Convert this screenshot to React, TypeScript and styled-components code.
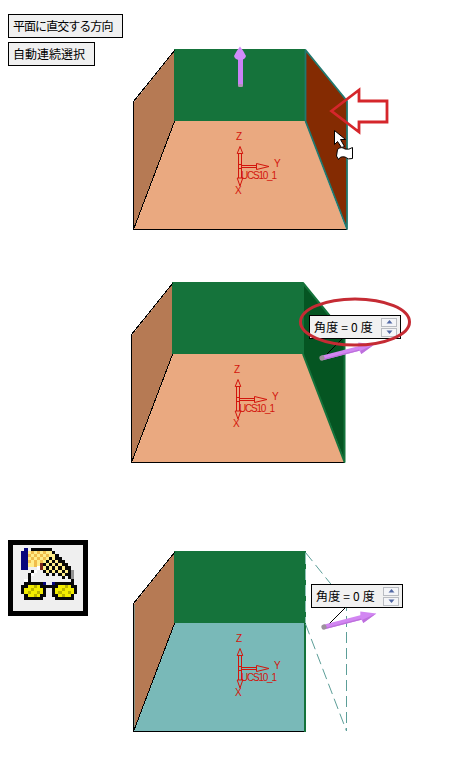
import React from "react";
import styled, { createGlobalStyle } from "styled-components";

const GlobalStyle = createGlobalStyle`
  body { margin: 0; background: #fff; overflow: hidden; }
  * { box-sizing: border-box; }
`;

const Page = styled.main`
  width: 453px;
  height: 769px;
  display: flex;
  flex-direction: column;
  background: #fff;
  color: #000;
  font-family: "Noto Sans CJK JP", sans-serif;
`;

const Step = styled.section<{ $height: number }>`
  display: flex;
  height: ${(p) => p.$height}px;
`;

const Side = styled.div<{ $top: number }>`
  width: 124px;
  flex: none;
  display: flex;
  flex-direction: column;
  align-items: flex-start;
  gap: 4px;
  padding: ${(p) => p.$top}px 0 0 8px;
`;

const OptionButton = styled.button<{ $width: number; $spacing?: number }>`
  width: ${(p) => p.$width}px;
  height: 24px;
  padding: 0 0 1px 4px;
  border: 1px solid #000;
  border-radius: 0;
  background: #f0f0f0;
  color: #000;
  font: 12px/20px "Noto Sans CJK JP", sans-serif;
  letter-spacing: ${(p) => p.$spacing ?? 0}px;
  text-align: left;
  white-space: nowrap;
`;

const ToolButton = styled.button`
  width: 80px;
  height: 76px;
  padding: 0;
  border: 5px solid #000;
  border-radius: 0;
  background: #efefef;
  display: flex;
`;

const Figure = styled.div`
  position: relative;
  flex: 1;
  min-width: 0;
`;

const Drawing = styled.svg`
  display: block;
`;

const Overlay = styled.svg`
  position: absolute;
  left: 0;
  top: 0;
`;

const AngleBox = styled.div<{ $left: number; $top: number }>`
  position: absolute;
  left: ${(p) => p.$left}px;
  top: ${(p) => p.$top}px;
  width: 92px;
  height: 24px;
  padding: 0 3px 0 4px;
  border: 1px solid #000;
  background: #f1f1f1;
  display: flex;
  align-items: center;
  justify-content: space-between;
  font-size: 12px;
  line-height: 20px;
  white-space: pre;
`;

const AngleText = styled.span`
  padding-bottom: 1px;
  letter-spacing: 0.2px;
`;

const Spinner = styled.div`
  display: flex;
  flex-direction: column;
  gap: 1px;
`;

const SpinButton = styled.button`
  width: 16px;
  height: 9px;
  padding: 0;
  display: flex;
  align-items: center;
  justify-content: center;
  border: 1px solid #b9bcc2;
  border-radius: 0;
  background: #f4f5f8;
`;

const Mark = styled.text`
  font-family: "Liberation Sans", sans-serif;
  font-size: 10px;
  fill: #d3150c;
`;

const RED = "#d3150c";
const GREEN = "#15733b";

function Axes() {
  return (
    <g fill="none" stroke={RED} strokeWidth="1">
      <path d="M238.5 164V153M241.5 164V153M238.5 169V178M241.5 169V178M242 165.5H256M242 167.5H256" />
      <rect x="238.5" y="164.5" width="3" height="4" />
      <path d="M240 146.5L242.8 153.5H237.2ZM240 186L242.8 178H237.2ZM269 166.5L256.5 163.5V169.5Z" />
      <g stroke="none">
        <Mark x="236" y="140">Z</Mark>
        <Mark x="274" y="167">Y</Mark>
        <Mark x="235" y="194">X</Mark>
        <Mark x="241" y="179" textLength="36">UCS10_1</Mark>
      </g>
    </g>
  );
}

function Box({ floor, seam = true }: { floor: string; seam?: boolean }) {
  return (
    <g>
      <path d="M134 102L175 50V121L134 229Z" fill="#b67a54" />
      <path d={seam ? "M175 121H305L346 229H134Z" : "M175 121H305V229H134Z"} fill={floor} />
      <path d="M174 49H305V121H174Z" fill={GREEN} />
      <g shapeRendering="crispEdges" fill="none" stroke="#000">
        <path d="M174.5 50.5L133.5 101.5V229.5L174.5 121.5" />
        <path d={seam ? "M133 229.5H347" : "M133 229.5H305"} />
      </g>
    </g>
  );
}

function DirectionArrow({ x, y }: { x: number; y: number }) {
  return (
    <g transform={`translate(${x} ${y}) rotate(-14.4)`}>
      <path d="M0 -2.3H41V2.3H0Z" fill="#d286f2" />
      <path d="M0 1H41V2.3H0Z" fill="#bd70dc" />
      <path d="M39 -6Q37 0 39 6L54 0Z" fill="#d286f2" />
      <path d="M39 6L54 0L39 2.5Z" fill="#bd70dc" />
      <circle r="2.6" fill="#9c929c" />
    </g>
  );
}

function AngleInput({ left, top }: { left: number; top: number }) {
  return (
    <AngleBox $left={left} $top={top}>
      <AngleText>角度 = 0 度</AngleText>
      <Spinner>
        <SpinButton aria-label="up">
          <svg width="7" height="4"><path d="M3.5 0L6.5 3.5H0.5Z" fill="#5269a5" /></svg>
        </SpinButton>
        <SpinButton aria-label="down">
          <svg width="7" height="4"><path d="M0.5 0.5H6.5L3.5 4Z" fill="#5269a5" /></svg>
        </SpinButton>
      </Spinner>
    </AngleBox>
  );
}

const TOOL_PIXELS = [
  ".B.KKKKKKK........",
  "BByoyoyoyyK.......",
  "BBoyoyoyoyyK......",
  "BByoyoyoyKyKK.....",
  "BBoyoyoyKyKyKK....",
  "BByyoyrKyKyKyKK...",
  "BB...wryKyKyKyKK..",
  "...Kw..KyKyKyKyKg.",
  "..Kw....K.K.KyKKg.",
  "..K..........K.Kg.",
  ".wK.............K.",
  ".KKKKKKB..BKKKKKK.",
  "KKYYoYKKKKKKYYoYKK",
  "KYYoYYYK..KYYoYYYK",
  "KYoYYoYK..KYoYYoYK",
  ".KYYoYKK..KKYoYYK.",
  ".KKKKKK....KKKKKK.",
];
const TOOL_COLORS: Record<string, string> = {
  B: "#06067c", K: "#080808", y: "#ffed8b", o: "#f0bd4c",
  r: "#7b2618", Y: "#f3ed00", w: "#fff", g: "#929292",
};

function GlassesIcon() {
  return (
    <svg width="70" height="66" shapeRendering="crispEdges">
      <g transform="translate(8.3 3) scale(3.1 3.08)">
        {TOOL_PIXELS.flatMap((row, y) =>
          [...row].map((c, x) =>
            c === "." ? null : (
              <rect
                key={`${x}-${y}`}
                x={x}
                y={y}
                width="1.02"
                height="1.02"
                fill={c === "o" && y > 9 ? "#b9b300" : TOOL_COLORS[c]}
              />
            )
          )
        )}
      </g>
    </svg>
  );
}

export default function App() {
  return (
    <>
      <GlobalStyle />
      <Page>
        <Step $height={270}>
          <Side $top={14}>
            <OptionButton $width={115} $spacing={-0.95}>平面に直交する方向</OptionButton>
            <OptionButton $width={87}>自動連続選択</OptionButton>
          </Side>
          <Figure>
            <Drawing width="329" height="270" viewBox="124 0 329 270">
              <Box floor="#eaa980" />
              <path d="M305 50L347 101V229L305 121Z" fill="#842b02" />
              <path d="M305.5 121V50L347 101V229L305.5 121" fill="none" stroke="#20786f" strokeWidth="1.8" strokeLinejoin="round" />
              <Axes />
              <path d="M238 59H243V84Q243 87 240.5 87Q238 87 238 84Z" fill="#ca82f5" />
              <rect x="238" y="84" width="5" height="3" rx="1.5" fill="#af94b2" />
              <path d="M240 46.5Q243 50 246 56Q245 60 240 60Q235 60 234 56Q237 50 240 46.5Z" fill="#d18bfa" />
              <path d="M331.5 111L359 90V101H387V122H359V132Z" fill="none" stroke="#d5262b" strokeWidth="2.8" />
              <path d="M334.5 130.5V144.5L337.5 141.5L341.5 147.5L344.5 146.5L340.5 139.5H345.5Z" fill="#fff" stroke="#000" />
              <path d="M337.5 149.5Q341 146 345 149Q349 150 352.5 147.5V158.5Q348 160 345 157Q340 156 338.5 159.5L336.5 156Z" fill="#fff" stroke="#000" />
            </Drawing>
          </Figure>
        </Step>
        <Step $height={250}>
          <Side $top={0} />
          <Figure>
            <Drawing width="329" height="250" viewBox="124 270 329 250">
              <g transform="translate(-2 233)">
                <Box floor="#eaa980" />
                <path d="M305 50L347 101V229L305 121Z" fill="#055522" />
                <path d="M305 121V50L346.5 101V229L305 121" fill="none" stroke={GREEN} strokeWidth="2" strokeLinejoin="round" />
                <Axes />
              </g>
              <path d="M327 354L344 337" stroke="#000" shapeRendering="crispEdges" />
              <DirectionArrow x={322} y={358} />
            </Drawing>
            <AngleInput left={185} top={45} />
            <Overlay width="329" height="250" viewBox="124 270 329 250">
              <ellipse cx="355" cy="322" rx="54.5" ry="23" fill="none" stroke="#c52b34" strokeWidth="3" />
            </Overlay>
          </Figure>
        </Step>
        <Step $height={249}>
          <Side $top={20}>
            <ToolButton aria-label="glasses"><GlassesIcon /></ToolButton>
          </Side>
          <Figure>
            <Drawing width="329" height="249" viewBox="124 520 329 249">
              <g transform="translate(0 502)">
                <Box floor="#79b9b8" seam={false} />
                <path d="M134.5 103V225" stroke="#8e9181" />
                <path d="M305 121V230" stroke={GREEN} strokeWidth="2" />
                <path d="M305 49V121" stroke={GREEN} strokeWidth="2" />
                <path d="M305.5 51V121" stroke="#8dc2b6" strokeDasharray="11 5" />
                <g fill="none" stroke="#5c9e98" strokeDasharray="11 5">
                  <path d="M305.5 50.5L346.5 101.5" />
                  <path d="M305.5 122L346.5 229" />
                  <path d="M346.5 98V229" />
                </g>
                <Axes />
              </g>
              <path d="M329 624L346 607" stroke="#000" shapeRendering="crispEdges" />
              <DirectionArrow x={324} y={627} />
            </Drawing>
            <AngleInput left={187} top={64} />
          </Figure>
        </Step>
      </Page>
    </>
  );
}
